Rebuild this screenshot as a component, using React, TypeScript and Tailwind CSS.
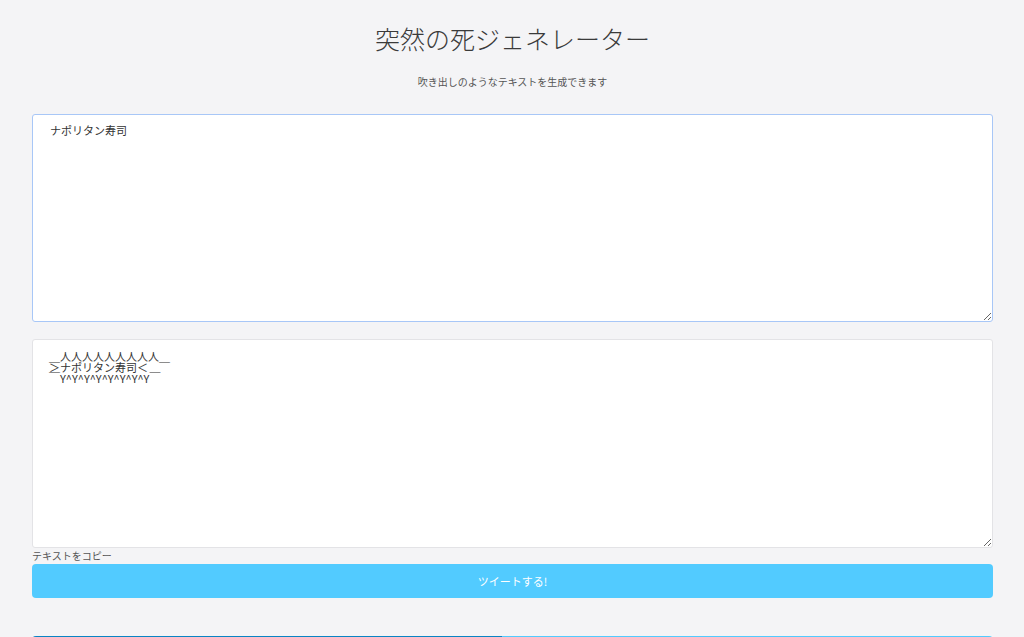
import { useState } from "react";

const FONT = "font-['Noto_Sans_CJK_JP','Noto_Sans',sans-serif]";

function makeBalloon(text: string) {
  const n = text.length + 2;
  const top = "＿" + "人".repeat(n) + "＿";
  const mid = "＞" + text + "＜";
  const bottom = "￣" + "Y^".repeat(n - 2) + "Y" + "￣";
  return [top, mid, bottom].join("\n");
}

export default function App() {
  const [text, setText] = useState("ナポリタン寿司");

  return (
    <div className={`min-h-screen bg-[#f4f4f6] ${FONT}`}>
      <div className="pl-8 pr-[31px] pt-[22px] pb-10">
        <h1 className="text-center text-[25px] leading-[32px] font-light text-[#3a3a3a]">
          突然の死ジェネレーター
        </h1>
        <p className="mt-[21px] text-center text-[10px] leading-[14px] text-[#555]">
          吹き出しのようなテキストを生成できます
        </p>

        <textarea
          value={text}
          onChange={(e) => setText(e.target.value)}
          className="mt-[25px] block w-full h-[208px] rounded-[3px] border border-[#a8c7f7] bg-white pl-[17px] pr-4 pt-[9px] text-[11px] leading-[12px] text-[#333] outline-none"
        />

        <textarea
          readOnly
          value={makeBalloon(text)}
          className="mt-[17px] block w-full h-[209px] rounded-[3px] border border-[#e3e3e6] bg-white pl-[16px] pr-4 pt-[11px] text-[11px] leading-[11px] text-[#333] outline-none"
        />

        <div className="mt-[1px] text-[10px] leading-[14px] text-[#555]">テキストをコピー</div>

        <button className="mt-[1px] block w-full h-[34px] rounded-[4px] bg-[#52cbff] text-[11px] text-white">
          ツイートする!
        </button>

        {/* share buttons, only their top edge is in view */}
        <div className="mt-[38px] flex">
          <div className="w-[470px] h-[34px] rounded-l-[4px] bg-[#0a84c4]" />
          <div className="flex-1 h-[34px] rounded-r-[4px] bg-[#52cbff]" />
        </div>
      </div>
    </div>
  );
}
